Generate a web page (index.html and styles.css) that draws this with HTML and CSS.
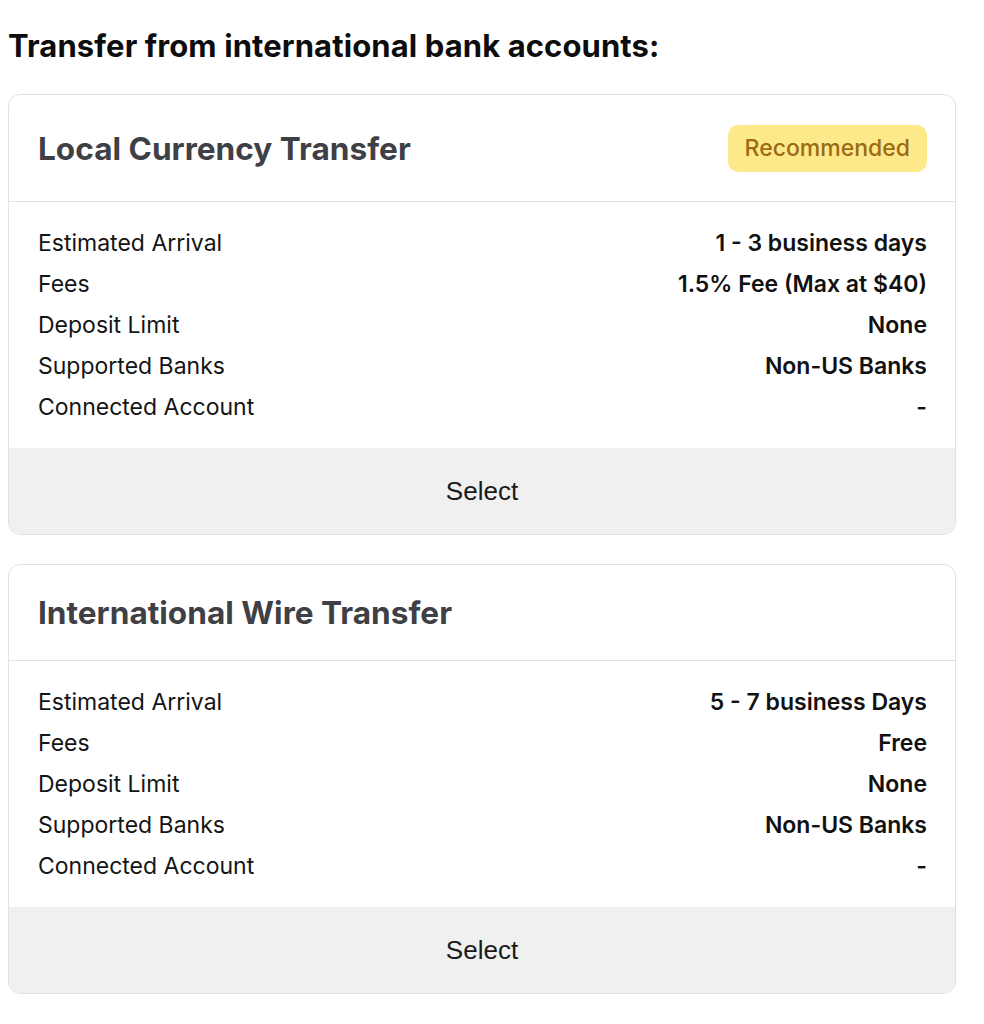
FILE: index.html
```html
<!DOCTYPE html>
<html>
<head>
<meta charset="utf-8">
<link rel="stylesheet" href="styles.css">
</head>
<body>
<h1 class="page-title">Transfer from international bank accounts:</h1>

<div class="card">
  <div class="card-header card-header-badge">
    <h2 class="card-title">Local Currency Transfer</h2>
    <span class="badge">Recommended</span>
  </div>
  <div class="card-body">
    <div class="row"><span class="label">Estimated Arrival</span><span class="value">1 - 3 business days</span></div>
    <div class="row"><span class="label">Fees</span><span class="value">1.5% Fee (Max at $40)</span></div>
    <div class="row"><span class="label">Deposit Limit</span><span class="value">None</span></div>
    <div class="row"><span class="label">Supported Banks</span><span class="value">Non-US Banks</span></div>
    <div class="row"><span class="label">Connected Account</span><span class="value">-</span></div>
  </div>
  <div class="card-footer">Select</div>
</div>

<div class="card">
  <div class="card-header">
    <h2 class="card-title">International Wire Transfer</h2>
  </div>
  <div class="card-body">
    <div class="row"><span class="label">Estimated Arrival</span><span class="value">5 - 7 business Days</span></div>
    <div class="row"><span class="label">Fees</span><span class="value">Free</span></div>
    <div class="row"><span class="label">Deposit Limit</span><span class="value">None</span></div>
    <div class="row"><span class="label">Supported Banks</span><span class="value">Non-US Banks</span></div>
    <div class="row"><span class="label">Connected Account</span><span class="value">-</span></div>
  </div>
  <div class="card-footer">Select</div>
</div>
</body>
</html>
```
FILE: styles.css
```css
* { box-sizing: border-box; }
body {
  margin: 0;
  padding: 26px 8px 0 8px;
  background: #ffffff;
  font-family: Inter, "Noto Sans", sans-serif;
  color: #111111;
}
.page-title {
  margin: 0 0 28px 0;
  font-size: 31px;
  line-height: 40px;
  font-weight: 700;
  color: #0d0d0d;
  letter-spacing: 0.1px;
}
.card {
  width: 948px;
  border: 1px solid #e2e2e2;
  border-radius: 12px;
  overflow: hidden;
  margin-bottom: 29px;
}
.card-header {
  display: flex;
  align-items: center;
  justify-content: space-between;
  padding: 0 28px 0 29px;
  min-height: 96px;
  border-bottom: 1px solid #e2e2e2;
}
.card-header-badge { min-height: 107px; }
.card-title {
  margin: 0;
  font-size: 31.6px;
  font-weight: 700;
  color: #3f3f46;
}
.badge {
  background: #fde98a;
  color: #9a6b12;
  font-size: 23px;
  font-weight: 500;
  height: 47px;
  line-height: 47px;
  padding: 0 17px;
  border-radius: 10px;
}
.card-body {
  padding: 21px 28px 20px 29px;
}
.row {
  display: flex;
  justify-content: space-between;
  line-height: 41px;
  font-size: 23px;
}
.label { color: #141414; }
.value { font-weight: 600; color: #111111; }
.card-footer {
  background: #f0f0f0;
  height: 86px;
  display: flex;
  align-items: center;
  justify-content: center;
  font-family: "Liberation Sans", Arial, sans-serif;
  font-size: 26px;
  color: #1a1a1a;
}
```
